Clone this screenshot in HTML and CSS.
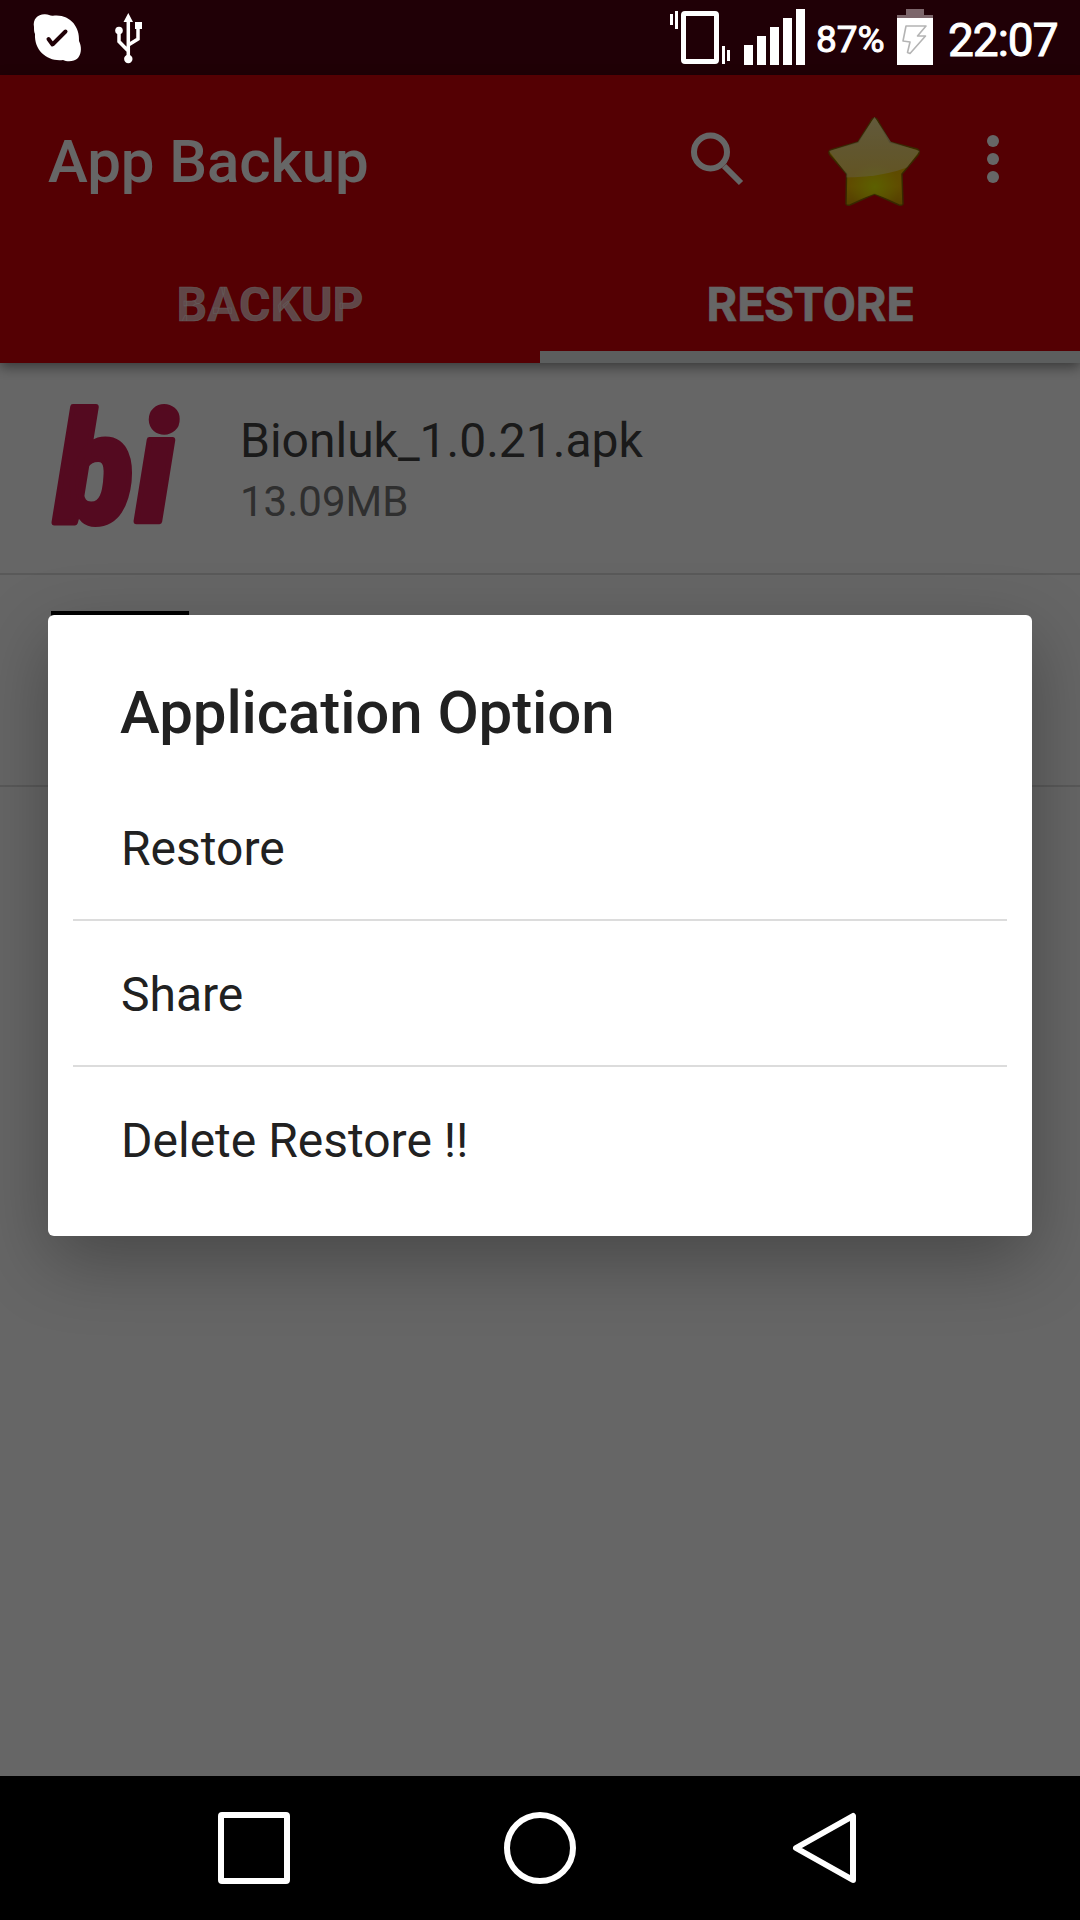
FILE: index.html
```html
<!DOCTYPE html>
<html>

<head>
    <title>App Backup</title>
    <meta charset="utf-8">
    <meta name="viewport" content="width=device-width, initial-scale=1">
    <link rel="stylesheet" href="styles.css">
</head>

<body>
    <!-- Status bar -->
    <div class="statusbar">
        <svg class="notify" width="120" height="75" viewBox="30 0 120 75">
            <path fill="#fff" d="M34 27C32.500 19 38 14 45 14.300C49 14.500 50 16 53 15.700C69 13.500 80 26 79 41C81.500 46 82 53 78 58C74 62 67 62 63 60C48 62 34 51 35 34C34 32 34 30 34 27Z" />
            <path fill="none" stroke="#200006" stroke-width="4" stroke-linecap="round" stroke-linejoin="round" d="M48.500 39L52.500 44.500L65.500 31.500" />
            <g fill="none" stroke="#fff" stroke-width="3.500">
                <path d="M128.300 20V58M119 32V41.500L128.300 51M138 26V39L128.300 45" />
            </g>
            <path fill="#fff" d="M128.300 13L133 22H123.500ZM135 22H142V29H135Z" />
            <circle cx="119" cy="30.500" r="3.800" fill="#fff" />
            <circle cx="128.300" cy="59" r="4.200" fill="#fff" />
        </svg>
        <div class="system">
            <svg width="140" height="75" viewBox="668 0 140 75" fill="#fff">
                <path d="M670 14h3v11h-3zM675 11h3v18h-3zM722 46h3v18h-3zM727 50h3v11h-3z" />
                <rect x="683.500" y="13.500" width="33" height="48" rx="1.500" fill="none" stroke="#fff" stroke-width="5" />
                <path d="M744 45h9v20h-9zM757 36h9v29h-9zM770 27h9v38h-9zM783 18h9v47h-9zM796 9h9v56h-9z" />
            </svg>
            <span class="percent">87%</span>
            <svg class="battery" width="36" height="75" viewBox="897 0 36 75">
                <path fill="#7c666b" d="M906 9h18v6h9v3h-36v-3h9z" />
                <path fill="#fff" d="M897 18h36v47h-36z" />
                <path fill="none" stroke="#b4b4b4" stroke-width="1.600" stroke-linejoin="round" d="M906 26H926L917.500 36H925.500L910 53.500L907.500 52.500L910 42L903 41Z" />
            </svg>
            <span class="clock">22:07</span>
        </div>
    </div>

    <div class="screen">
        <div class="appbar">
            <div class="toolbar">
                <h1>App Backup</h1>
                <svg width="330" height="168" viewBox="680 75 330 168">
                    <defs>
                        <linearGradient id="gold" x1="0" y1="0" x2="0" y2="1">
                            <stop offset="0" stop-color="#dcb400" />
                            <stop offset=".78" stop-color="#f0be00" />
                            <stop offset="1" stop-color="#d2a000" />
                        </linearGradient>
                        <radialGradient id="glow" cx=".5" cy=".8" r=".28">
                            <stop offset="0" stop-color="#e6f000" />
                            <stop offset="1" stop-color="#e6f000" stop-opacity="0" />
                        </radialGradient>
                        <linearGradient id="shine" x1="0" y1="0" x2="0" y2="1">
                            <stop offset="0" stop-color="#fff2d2" stop-opacity=".72" />
                            <stop offset="1" stop-color="#fff0d2" stop-opacity=".42" />
                        </linearGradient>
                        <clipPath id="star">
                            <path d="M874.500 117L891 142L919.500 151L902 174L903 205L874.500 194L846 205L846.500 174L829 151L858 142Z" />
                        </clipPath>
                    </defs>
                    <circle cx="710.500" cy="152" r="16.500" fill="none" stroke="#fff" stroke-width="6" />
                    <path d="M724 166L741 183" stroke="#fff" stroke-width="6" />
                    <g class="star">
                        <path d="M874.500 118Q877 118 879 123L890 142L917 149Q921 151 918 155L902 174L903 204Q902 206 899 205L874.500 194L850 205Q847 206 846 204L846.500 174L830 155Q827 151 832 149.500L858 142L870 123Q872 118 874.500 118Z" fill="url(#gold)" stroke="#8c6400" stroke-width="1.500" />
                        <path d="M874.500 118Q877 118 879 123L890 142L917 149Q921 151 918 155L902 174L903 204L874.500 194L846 204L846.500 174L830 155L858 142L870 123Z" fill="url(#glow)" />
                        <path clip-path="url(#star)" d="M826 115H922V160Q890 180 826 177Z" fill="url(#shine)" />
                    </g>
                    <g fill="#fff">
                        <circle cx="993" cy="141" r="6" />
                        <circle cx="993" cy="159" r="6" />
                        <circle cx="993" cy="177" r="6" />
                    </g>
                </svg>
            </div>
            <div class="tabs">
                <div class="tab">BACKUP</div>
                <div class="tab active">RESTORE</div>
            </div>
        </div>

        <!-- Saved apk files -->
        <div class="row">
            <svg class="icon" viewBox="0 0 144 144">
                <text class="logo" transform="translate(7 126) scale(.93 1)">bi</text>
            </svg>
            <div>
                <div class="name">Bionluk_1.0.21.apk</div>
                <div class="size">13.09MB</div>
            </div>
        </div>
        <div class="row">
            <svg class="icon" viewBox="0 0 144 144">
                <rect x="3" y="3" width="138" height="138" />
            </svg>
        </div>

        <div class="overlay">
            <div class="dialog">
                <h2>Application Option</h2>
                <div class="option">Restore</div>
                <div class="option">Share</div>
                <div class="option">Delete Restore !!</div>
            </div>
        </div>
    </div>

    <!-- Navigation keys -->
    <div class="navbar">
        <svg width="72" height="72" viewBox="0 0 72 72">
            <rect x="3" y="3" width="66" height="66" rx="1" />
        </svg>
        <svg width="72" height="72" viewBox="0 0 72 72">
            <circle cx="36" cy="36" r="33" />
        </svg>
        <svg width="72" height="72" viewBox="0 0 72 72">
            <path d="M64 4V68L7 36Z" />
        </svg>
    </div>
</body>

</html>
```
FILE: styles.css
```css
html, body {
    margin: 0;
    height: 100%;
}

body {
    display: flex;
    flex-direction: column;
    width: 1080px;
    height: 1920px;
    overflow: hidden;
    font-family: Roboto, sans-serif;
    background-color: #000;
}

svg {
    display: block;
    flex: none;
}

/* status bar */
.statusbar {
    display: flex;
    justify-content: space-between;
    height: 75px;
    padding: 0 20px 0 30px;
    background-color: #200006;
    color: #fff;
}

.system {
    display: flex;
    width: 392px;
    line-height: 80px;
    -webkit-text-stroke: 1px #fff;
}

.percent {
    width: 74px;
    margin-left: 8px;
    font-size: 37px;
}

.battery {
    margin-left: 7px;
}

.clock {
    margin-left: 15px;
    font-size: 46px;
    letter-spacing: -1px;
    white-space: nowrap;
}

/* app */
.screen {
    position: relative;
    height: 1701px;
    background-color: #fff;
}

.appbar {
    position: relative;
    height: 288px;
    background-color: #d20008;
    color: #fff;
    box-shadow: 0 4px 12px rgba(0, 0, 0, .45);
}

.toolbar {
    display: flex;
    justify-content: space-between;
    align-items: center;
    height: 168px;
    padding: 0 70px 0 48px;
}

h1 {
    margin: 0;
    padding-top: 4px;
    font-size: 60px;
    font-weight: 500;
    letter-spacing: -.1px;
}

.tabs {
    display: flex;
    height: 120px;
}

.tab {
    flex: 1;
    box-sizing: border-box;
    padding-top: 5px;
    border-bottom: 12px solid transparent;
    line-height: 114px;
    font-size: 48px;
    font-weight: bold;
    text-align: center;
    color: rgba(255, 255, 255, .7);
    -webkit-text-stroke: .6px;
}

.tab.active {
    color: #fff;
    border-color: #e6ecea;
}

.row {
    display: flex;
    align-items: center;
    height: 210px;
    padding: 0 48px;
    border-bottom: 2px solid #dedede;
}

.icon {
    width: 144px;
    height: 144px;
    margin-right: 48px;
    overflow: visible;
}

.logo {
    font-size: 154px;
    font-weight: 900;
    font-style: italic;
    letter-spacing: 3px;
    fill: #d21a50;
    stroke: #d21a50;
    stroke-width: 6px;
    stroke-linejoin: round;
}

.name {
    padding-top: 9px;
    font-size: 48px;
    line-height: 58px;
    color: #434343;
}

.size {
    font-size: 42px;
    line-height: 64px;
    color: #757575;
}

/* dialog */
.overlay {
    position: absolute;
    top: 0;
    left: 0;
    right: 0;
    bottom: 0;
    display: flex;
    align-items: center;
    justify-content: center;
    background-color: rgba(0, 0, 0, .6);
}

.dialog {
    box-sizing: border-box;
    width: 984px;
    height: 621px;
    padding: 0 25px;
    border-radius: 6px;
    background-color: #fff;
    color: #212121;
    box-shadow: 0 24px 72px rgba(0, 0, 0, .3);
}

h2 {
    margin: 0;
    padding: 63px 47px 27px;
    line-height: 70px;
    font-size: 60px;
    font-weight: 500;
    letter-spacing: -.1px;
}

.option {
    height: 144px;
    padding: 0 48px;
    line-height: 148px;
    font-size: 48px;
    border-bottom: 2px solid #dcdcdc;
}

.option:last-child {
    border: none;
}

/* navigation bar */
.navbar {
    display: flex;
    align-items: center;
    justify-content: space-between;
    height: 144px;
    padding: 0 219px 0 218px;
    background-color: #000;
}

.navbar svg {
    fill: none;
    stroke: #fff;
    stroke-width: 6;
    stroke-linejoin: round;
}
```
